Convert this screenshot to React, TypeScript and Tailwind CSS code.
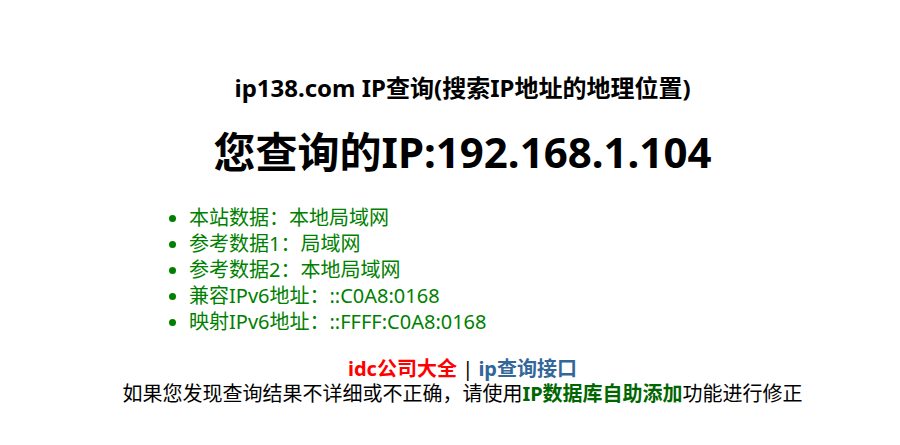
export default function App() {
  const items = [
    "本站数据：本地局域网",
    "参考数据1：局域网",
    "参考数据2：本地局域网",
    "兼容IPv6地址：::C0A8:0168",
    "映射IPv6地址：::FFFF:C0A8:0168",
  ];

  return (
    <div
      className="min-h-[445px] w-full bg-white pt-[72px] pl-[25px] text-black"
      style={{ fontFamily: '"Noto Sans", "Noto Sans CJK SC", sans-serif' }}
    >
      <h3 className="text-center text-[24px] leading-[32px] font-bold">
        ip138.com IP查询(搜索IP地址的地理位置)
      </h3>
      <h1 className="mt-[24px] text-center text-[42px] leading-[48px] font-bold">
        您查询的IP:192.168.1.104
      </h1>

      <ul className="mt-[29px] pl-[144px]">
        {items.map((item) => (
          <li
            key={item}
            className="flex items-center gap-[13px] text-[20px] leading-[26px] text-[#008000]"
          >
            <span className="h-[7px] w-[7px] shrink-0 rounded-full bg-[#008000]" />
            <span>{item}</span>
          </li>
        ))}
      </ul>

      <div className="mt-[21px] text-center text-[20px] leading-[25px]">
        <p>
          <a href="#" className="font-bold text-[#ff0000]">
            idc公司大全
          </a>{" "}
          |{" "}
          <a href="#" className="font-bold text-[#336699]">
            ip查询接口
          </a>
        </p>
        <p>
          如果您发现查询结果不详细或不正确，请使用
          <a href="#" className="font-bold text-[#006600]">
            IP数据库自助添加
          </a>
          功能进行修正
        </p>
      </div>
    </div>
  );
}
